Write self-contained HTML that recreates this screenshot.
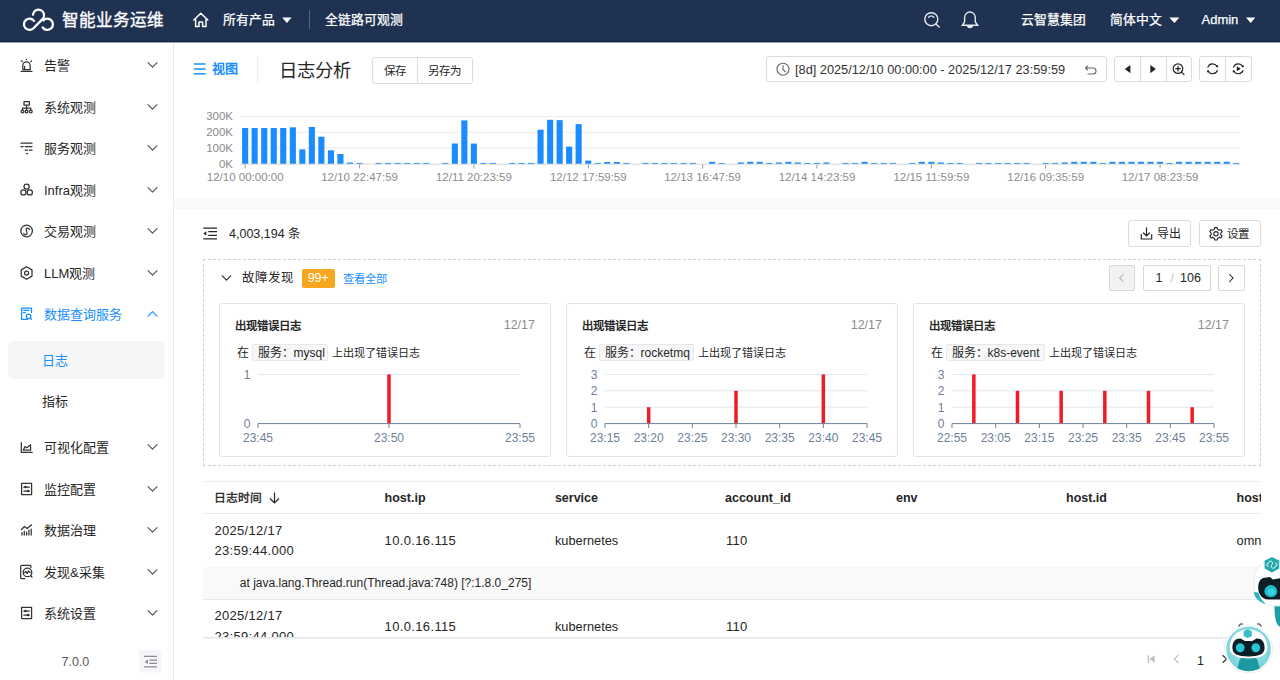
<!DOCTYPE html>
<html lang="zh-CN"><head><meta charset="utf-8">
<style>
*{box-sizing:border-box;margin:0;padding:0}
html,body{width:1280px;height:680px;overflow:hidden;background:#fff}
body{position:relative;font-family:"Liberation Sans",sans-serif;color:#262626;font-size:13px}
.a{position:absolute;white-space:nowrap}
#hdr{position:absolute;left:0;top:0;width:1280px;height:42px;background:#1f3251;border-bottom:1px solid #0f1f3b;box-shadow:0 1px 0 rgba(15,31,59,0.4);z-index:5}
#hdr .t{position:absolute;color:#fff;white-space:nowrap;-webkit-text-stroke:0.25px #fff}
#side{position:absolute;left:0;top:42px;width:174px;height:638px;border-right:1px solid #ebebeb;background:#fff}
.mi{position:absolute;left:0;width:173px;height:40px}
.mi .ic{position:absolute;left:20px;top:14px;width:13px;height:13px}
.mi .tx{position:absolute;left:44px;top:0;line-height:40px;font-size:13px;color:#262626;white-space:nowrap}
.mi .cv{position:absolute;left:148px;top:17px;width:9px;height:6px}
.btn{position:absolute;border:1px solid #dcdcdc;border-radius:3px;background:#fff}
svg{display:block}
</style></head><body>
<div id="hdr">
<svg class="a" style="left:0;top:0" width="60" height="42" viewBox="0 0 60 42">
<g fill="none" stroke="#fff" stroke-width="2.3" stroke-linecap="round">
<path d="M33.97,20.93 A5.6,5.6 0 1 0 33.46,28.26 L42.46,19.16 A5.6,5.6 0 1 0 32.94,14.52"/>
<path d="M43.34,20.34 A5.6,5.6 0 1 1 42.71,27.51"/>
</g></svg>
<div class="t" style="left:62px;top:10px;font-size:16.6px;line-height:22px;-webkit-text-stroke:0.35px #fff">智能业务运维</div>
<svg class="a" style="left:190px;top:10px" width="22" height="22" viewBox="190 10 22 22">
<path d="M193.8,20 L200.8,13.2 L207.8,20 M195.6,18.3 V26.6 H199 V22 H202.6 V26.6 H206 V18.3" fill="none" stroke="#fff" stroke-width="1.5" stroke-linejoin="round" stroke-linecap="round"/>
</svg>
<div class="t" style="left:223px;top:11px;font-size:12.8px;line-height:18px">所有产品</div>
<svg class="a" style="left:280px;top:15px" width="14" height="10" viewBox="280 15 14 10"><path d="M282.2,17.4 H291.6 L286.9,23 Z" fill="#fff"/></svg>
<div class="a" style="left:309px;top:10px;width:1px;height:19px;background:#56667f"></div>
<div class="t" style="left:324.5px;top:11px;font-size:12.8px;line-height:18px">全链路可观测</div>
<svg class="a" style="left:920px;top:8px" width="64" height="26" viewBox="920 8 64 26">
<g fill="none" stroke="#e6e9ee" stroke-width="1.4" stroke-linecap="round">
<circle cx="931.3" cy="19.2" r="6.5"/>
<path d="M928.7,17.2 Q931.2,14.6 933.8,17.2"/>
<path d="M935.9,23.9 L939.2,27"/>
<path d="M962.3,25.3 L964.6,22 V17.6 A5.35,5.6 0 0 1 975.3,17.6 V22 L977.7,25.3 Z"/>
<path d="M967.6,26.3 A2.5,1.9 0 0 0 972.4,26.3 Z" fill="#e6e9ee"/>
</g></svg>
<div class="t" style="left:1021px;top:11px;font-size:12.8px;line-height:18px">云智慧集团</div>
<div class="t" style="left:1110px;top:11px;font-size:12.8px;line-height:18px">简体中文</div>
<svg class="a" style="left:1167px;top:15px" width="14" height="10" viewBox="1167 15 14 10"><path d="M1169.3,17.4 H1179.4 L1174.35,23 Z" fill="#fff"/></svg>
<div class="t" style="left:1201.5px;top:11px;font-size:13px;line-height:18px">Admin</div>
<svg class="a" style="left:1244px;top:15px" width="14" height="10" viewBox="1244 15 14 10"><path d="M1246,17.4 H1255.3 L1250.65,23 Z" fill="#fff"/></svg>
</div>
<div id="side"></div>
<div class="a" style="left:8px;top:341px;width:157px;height:38px;border-radius:5px;background:#f5f6f8"></div>
<svg class="a" style="left:0;top:42px" width="173" height="638" viewBox="0 42 173 638">
<g stroke="#333" stroke-width="1.25" fill="none" stroke-linecap="round" stroke-linejoin="round"><path d="M22.8,69.6 V65.6 A3.7,3.7 0 0 1 30.2,65.6 V69.6 Z M24.6,66.4 V69.2 M21.1,71.4 H31.9 M21.4,60.8 L22.2,61.5 M31.6,60.8 L30.8,61.5"/><circle cx="26.5" cy="59.6" r="0.75" fill="#333" stroke="none"/></g>
<path d="M148,62.7 L152.5,67.2 L157,62.7" fill="none" stroke="#595959" stroke-width="1.2" stroke-linecap="round" stroke-linejoin="round"/>
<g stroke="#333" stroke-width="1.25" fill="none" stroke-linecap="round" stroke-linejoin="round"><path d="M24,101.5 H29.3 V105.2 H24 Z M26.6,105.2 V108 M22.5,108 H30.8 M22.5,108 V110 M26.6,108 V110 M30.8,108 V110"/><circle cx="22.5" cy="111.5" r="1.4" stroke="#333" stroke-width="1.25" fill="none" stroke-linecap="round" stroke-linejoin="round"/><circle cx="26.6" cy="111.5" r="1.4" stroke="#333" stroke-width="1.25" fill="none" stroke-linecap="round" stroke-linejoin="round"/><circle cx="30.8" cy="111.5" r="1.4" stroke="#333" stroke-width="1.25" fill="none" stroke-linecap="round" stroke-linejoin="round"/></g>
<path d="M148,104.7 L152.5,109.2 L157,104.7" fill="none" stroke="#595959" stroke-width="1.2" stroke-linecap="round" stroke-linejoin="round"/>
<g stroke="#333" stroke-width="1.25" fill="none" stroke-linecap="round" stroke-linejoin="round"><path d="M21,143.2 H32 M21,146.6 H23.2 M25.2,146.6 H32 M25.2,150.2 H27.6 M29.4,150.2 H32 M26.5,153.6 H27.6"/></g>
<path d="M148,145.7 L152.5,150.2 L157,145.7" fill="none" stroke="#595959" stroke-width="1.2" stroke-linecap="round" stroke-linejoin="round"/>
<g stroke="#333" stroke-width="1.25" fill="none" stroke-linecap="round" stroke-linejoin="round"><circle cx="26.6" cy="186.6" r="2.6" stroke="#333" stroke-width="1.25" fill="none" stroke-linecap="round" stroke-linejoin="round"/><circle cx="23.4" cy="192.4" r="2.6" stroke="#333" stroke-width="1.25" fill="none" stroke-linecap="round" stroke-linejoin="round"/><circle cx="29.8" cy="192.4" r="2.6" stroke="#333" stroke-width="1.25" fill="none" stroke-linecap="round" stroke-linejoin="round"/></g>
<path d="M148,187.7 L152.5,192.2 L157,187.7" fill="none" stroke="#595959" stroke-width="1.2" stroke-linecap="round" stroke-linejoin="round"/>
<g stroke="#333" stroke-width="1.25" fill="none" stroke-linecap="round" stroke-linejoin="round"><circle cx="26.6" cy="231" r="5.8" stroke="#333" stroke-width="1.25" fill="none" stroke-linecap="round" stroke-linejoin="round"/><path d="M29.5,229.6 C29,227.6 26,227.6 26.2,229.8 C26.4,231.6 27.2,232 27,233.4 C26.8,235.4 24,235.2 23.8,233.4"/></g>
<path d="M148,228.7 L152.5,233.2 L157,228.7" fill="none" stroke="#595959" stroke-width="1.2" stroke-linecap="round" stroke-linejoin="round"/>
<g stroke="#333" stroke-width="1.25" fill="none" stroke-linecap="round" stroke-linejoin="round"><path d="M26.6,266.7 L32,269.9 V276.1 L26.6,279.3 L21.2,276.1 V269.9 Z"/><circle cx="26.6" cy="273" r="2" stroke="#333" stroke-width="1.25" fill="none" stroke-linecap="round" stroke-linejoin="round"/></g>
<path d="M148,270.7 L152.5,275.2 L157,270.7" fill="none" stroke="#595959" stroke-width="1.2" stroke-linecap="round" stroke-linejoin="round"/>
<g stroke="#1890ff" stroke-width="1.25" fill="none" stroke-linecap="round" stroke-linejoin="round"><path d="M27.5,319.3 H21.6 V308 H31.5 V312.5 M23.4,310.3 H29 M23.4,312.5 H25.3"/><circle cx="28.6" cy="316.4" r="2.3" stroke="#1890ff" stroke-width="1.25" fill="none" stroke-linecap="round" stroke-linejoin="round"/><path d="M30.3,318.1 L31.6,319.4"/></g>
<path d="M148,316.2 L152.5,311.7 L157,316.2" fill="none" stroke="#1890ff" stroke-width="1.2" stroke-linecap="round" stroke-linejoin="round"/>
<g stroke="#333" stroke-width="1.25" fill="none" stroke-linecap="round" stroke-linejoin="round"><path d="M21.3,442.5 V452.4 H32.2 M23.2,450.2 L25,446.6 L26.8,447.8 L30.6,444.8 V450.2 Z"/></g>
<path d="M148,444.7 L152.5,449.2 L157,444.7" fill="none" stroke="#595959" stroke-width="1.2" stroke-linecap="round" stroke-linejoin="round"/>
<g stroke="#333" stroke-width="1.25" fill="none" stroke-linecap="round" stroke-linejoin="round"><path d="M21.6,483.4 H31.6 V494.6 H21.6 Z M23.8,487 H29.4 M23.8,491 H29.4"/><circle cx="25.5" cy="487" r="1.3" fill="#333" stroke="none"/><circle cx="28" cy="491" r="1.3" fill="#333" stroke="none"/></g>
<path d="M148,486.7 L152.5,491.2 L157,486.7" fill="none" stroke="#595959" stroke-width="1.2" stroke-linecap="round" stroke-linejoin="round"/>
<g stroke="#333" stroke-width="1.25" fill="none" stroke-linecap="round" stroke-linejoin="round"><path d="M22,535 V532.5 M24.3,535 V531 M26.6,535 V532 M28.9,535 V530 M31.2,535 V529 M21.5,529.5 L24.5,526.5 L27,528.5 L31.5,525"/></g>
<path d="M148,527.7 L152.5,532.2 L157,527.7" fill="none" stroke="#595959" stroke-width="1.2" stroke-linecap="round" stroke-linejoin="round"/>
<g stroke="#333" stroke-width="1.25" fill="none" stroke-linecap="round" stroke-linejoin="round"><path d="M24.8,578.6 H21.6 A0.9,0.9 0 0 1 20.7,577.7 V566.2 A0.9,0.9 0 0 1 21.6,565.3 H30 A0.9,0.9 0 0 1 30.9,566.2 V567.6"/><circle cx="27.5" cy="572.4" r="4.3" stroke="#333" stroke-width="1.25" fill="none" stroke-linecap="round" stroke-linejoin="round"/><path d="M24.7,572.6 L25.9,571.6 L27.2,573.6 L28.4,570.9 L30.2,572.4 M30.6,575.5 L32,577.2"/></g>
<path d="M148,569.7 L152.5,574.2 L157,569.7" fill="none" stroke="#595959" stroke-width="1.2" stroke-linecap="round" stroke-linejoin="round"/>
<g stroke="#333" stroke-width="1.25" fill="none" stroke-linecap="round" stroke-linejoin="round"><path d="M21.6,607.4 H31.6 V618.6 H21.6 Z M23.8,611 H29.4 M23.8,615 H29.4"/><circle cx="25.5" cy="611" r="1.3" fill="#333" stroke="none"/><circle cx="28" cy="615" r="1.3" fill="#333" stroke="none"/></g>
<path d="M148,610.7 L152.5,615.2 L157,610.7" fill="none" stroke="#595959" stroke-width="1.2" stroke-linecap="round" stroke-linejoin="round"/>
<rect x="139" y="650" width="22.5" height="22.5" rx="0.5" fill="#f4f6f9"/>
<g stroke="#8c8c8c" stroke-width="1.3" fill="none"><path d="M144,656.3 H157 M149.4,660.2 H157 M149.4,663.3 H157 M144,666.8 H157"/></g><path d="M148,659.4 V664 L144.6,661.7 Z" fill="#8c8c8c"/>
</svg>
<div class="a" style="left:44px;top:56px;line-height:20px;font-size:13px;color:#262626">告警</div>
<div class="a" style="left:44px;top:98px;line-height:20px;font-size:13px;color:#262626">系统观测</div>
<div class="a" style="left:44px;top:139px;line-height:20px;font-size:13px;color:#262626">服务观测</div>
<div class="a" style="left:44px;top:181px;line-height:20px;font-size:13px;color:#262626">Infra观测</div>
<div class="a" style="left:44px;top:222px;line-height:20px;font-size:13px;color:#262626">交易观测</div>
<div class="a" style="left:44px;top:264px;line-height:20px;font-size:13px;color:#262626">LLM观测</div>
<div class="a" style="left:44px;top:305px;line-height:20px;font-size:13px;color:#1890ff">数据查询服务</div>
<div class="a" style="left:44px;top:438px;line-height:20px;font-size:13px;color:#262626">可视化配置</div>
<div class="a" style="left:44px;top:480px;line-height:20px;font-size:13px;color:#262626">监控配置</div>
<div class="a" style="left:44px;top:521px;line-height:20px;font-size:13px;color:#262626">数据治理</div>
<div class="a" style="left:44px;top:563px;line-height:20px;font-size:13px;color:#262626">发现&采集</div>
<div class="a" style="left:44px;top:604px;line-height:20px;font-size:13px;color:#262626">系统设置</div>
<div class="a" style="left:42px;top:351px;line-height:20px;font-size:13px;color:#1890ff">日志</div>
<div class="a" style="left:42px;top:392px;line-height:20px;font-size:13px;color:#262626">指标</div>
<div class="a" style="left:61.5px;top:653px;line-height:18px;font-size:12.5px;color:#595959">7.0.0</div>
<svg class="a" style="left:190px;top:58px" width="20" height="20" viewBox="190 58 20 20"><path d="M193.8,64.1 H205.6 M193.8,69 H205.6 M193.8,73.8 H205.6" stroke="#1890ff" stroke-width="1.5"/></svg>
<div class="a" style="left:212px;top:59px;font-size:13px;line-height:20px;color:#1890ff;font-weight:bold">视图</div>
<div class="a" style="left:257px;top:56px;width:1px;height:26px;background:#ececec"></div>
<div class="a" style="left:279px;top:58.5px;font-size:18.4px;line-height:24px;color:#262626">日志分析</div>
<div class="btn" style="left:372px;top:57px;width:101px;height:27px"></div>
<div class="a" style="left:416.5px;top:58px;width:1px;height:25px;background:#dcdcdc"></div>
<div class="a" style="left:383.5px;top:62px;font-size:11.5px;line-height:18px;color:#262626">保存</div>
<div class="a" style="left:428px;top:62px;font-size:11.5px;line-height:18px;color:#262626">另存为</div>
<div class="btn" style="left:766px;top:56px;width:341px;height:26px"></div>
<svg class="a" style="left:774px;top:60px" width="340" height="20" viewBox="774 60 340 20"><g fill="none" stroke="#666" stroke-width="1.1" stroke-linecap="round"><circle cx="783" cy="69.2" r="6"/><path d="M783,65.5 V69.5 L785.5,71.8"/><path d="M1087.5,66 L1085.5,68 L1087.5,70 M1085.8,68 H1093 A3,3 0 0 1 1093,74 H1088"/></g></svg>
<div class="a" style="left:795px;top:61px;font-size:12.75px;line-height:18px;color:#333">[8d] 2025/12/10 00:00:00 - 2025/12/17 23:59:59</div>
<div class="btn" style="left:1114px;top:56px;width:78px;height:26px"></div>
<div class="a" style="left:1140px;top:57px;width:1px;height:24px;background:#dcdcdc"></div>
<div class="a" style="left:1165.5px;top:57px;width:1px;height:24px;background:#dcdcdc"></div>
<div class="btn" style="left:1199px;top:56px;width:53px;height:26px"></div>
<div class="a" style="left:1225px;top:57px;width:1px;height:24px;background:#dcdcdc"></div>
<svg class="a" style="left:1114px;top:56px" width="140" height="26" viewBox="1114 56 140 26">
<path d="M1130.4,64.9 V73.3 L1124.8,69.1 Z" fill="#222"/>
<path d="M1150.3,64.9 V73.3 L1155.9,69.1 Z" fill="#222"/>
<g fill="none" stroke="#222" stroke-width="1.2" stroke-linecap="round"><circle cx="1178" cy="68.6" r="4.8"/><path d="M1178,66.3 V70.9 M1175.7,68.6 H1180.3 M1181.5,72.1 L1184,74.6"/>
<path d="M1207.9,67.1 A5,5 0 0 1 1216.9,66.3 M1217.3,70.5 A5,5 0 0 1 1208.3,71.3"/>
<path d="M1233.6,67.1 A5,5 0 0 1 1242.6,66.3 M1243,70.5 A5,5 0 0 1 1234,71.3"/></g>
<g fill="#222"><circle cx="1217.1" cy="66.3" r="1.15"/><circle cx="1208.1" cy="71.4" r="1.15"/><circle cx="1242.8" cy="66.3" r="1.15"/><circle cx="1233.8" cy="71.4" r="1.15"/></g>
<path d="M1236.8,66.3 V71.3 L1240.8,68.8 Z" fill="#222"/>
</svg>

<svg class="a" style="left:174px;top:100px" width="1106" height="98" viewBox="174 100 1106 98">
<g stroke="#ebebeb" stroke-width="1"><path d="M240,116.5 H1240 M240,132.3 H1240 M240,148.1 H1240"/></g>
<g fill="#1b8cff"><rect x="242.1" y="128.0" width="6.1" height="36.0"/>
<rect x="251.6" y="128.0" width="6.1" height="36.0"/>
<rect x="261.2" y="128.0" width="6.1" height="36.0"/>
<rect x="270.7" y="128.0" width="6.1" height="36.0"/>
<rect x="280.2" y="128.0" width="6.1" height="36.0"/>
<rect x="289.8" y="127.3" width="6.1" height="36.7"/>
<rect x="299.3" y="149.4" width="6.1" height="14.6"/>
<rect x="308.8" y="127.0" width="6.1" height="37.0"/>
<rect x="318.3" y="136.7" width="6.1" height="27.3"/>
<rect x="327.9" y="150.3" width="6.1" height="13.7"/>
<rect x="337.4" y="154.0" width="6.1" height="10.0"/>
<rect x="346.9" y="162.5" width="6.1" height="1.5"/>
<rect x="356.5" y="162.9" width="6.1" height="1.1"/>
<rect x="375.5" y="162.9" width="6.1" height="1.1"/>
<rect x="385.0" y="162.9" width="6.1" height="1.1"/>
<rect x="394.6" y="162.9" width="6.1" height="1.1"/>
<rect x="404.1" y="162.9" width="6.1" height="1.1"/>
<rect x="413.6" y="162.9" width="6.1" height="1.1"/>
<rect x="423.2" y="162.9" width="6.1" height="1.1"/>
<rect x="442.2" y="162.9" width="6.1" height="1.1"/>
<rect x="451.8" y="143.5" width="6.1" height="20.5"/>
<rect x="461.3" y="120.4" width="6.1" height="43.6"/>
<rect x="470.8" y="143.6" width="6.1" height="20.4"/>
<rect x="480.3" y="162.9" width="6.1" height="1.1"/>
<rect x="489.9" y="162.9" width="6.1" height="1.1"/>
<rect x="508.9" y="162.9" width="6.1" height="1.1"/>
<rect x="518.5" y="162.9" width="6.1" height="1.1"/>
<rect x="528.0" y="162.9" width="6.1" height="1.1"/>
<rect x="537.5" y="129.7" width="6.1" height="34.3"/>
<rect x="547.1" y="119.8" width="6.1" height="44.2"/>
<rect x="556.6" y="120.1" width="6.1" height="43.9"/>
<rect x="566.1" y="146.6" width="6.1" height="17.4"/>
<rect x="575.6" y="124.1" width="6.1" height="39.9"/>
<rect x="585.2" y="160.6" width="6.1" height="3.4"/>
<rect x="594.7" y="162.9" width="6.1" height="1.1"/>
<rect x="604.2" y="162.0" width="6.1" height="2.0"/>
<rect x="613.8" y="162.0" width="6.1" height="2.0"/>
<rect x="623.3" y="162.9" width="6.1" height="1.1"/>
<rect x="642.4" y="162.9" width="6.1" height="1.1"/>
<rect x="651.9" y="162.9" width="6.1" height="1.1"/>
<rect x="661.4" y="162.9" width="6.1" height="1.1"/>
<rect x="670.9" y="162.9" width="6.1" height="1.1"/>
<rect x="680.5" y="162.9" width="6.1" height="1.1"/>
<rect x="690.0" y="162.9" width="6.1" height="1.1"/>
<rect x="709.1" y="161.8" width="6.1" height="2.2"/>
<rect x="718.6" y="162.9" width="6.1" height="1.1"/>
<rect x="737.7" y="162.4" width="6.1" height="1.6"/>
<rect x="747.2" y="161.8" width="6.1" height="2.2"/>
<rect x="756.7" y="161.8" width="6.1" height="2.2"/>
<rect x="766.2" y="162.9" width="6.1" height="1.1"/>
<rect x="775.8" y="162.4" width="6.1" height="1.6"/>
<rect x="785.3" y="161.8" width="6.1" height="2.2"/>
<rect x="794.8" y="162.4" width="6.1" height="1.6"/>
<rect x="804.4" y="162.9" width="6.1" height="1.1"/>
<rect x="813.9" y="162.9" width="6.1" height="1.1"/>
<rect x="823.4" y="162.4" width="6.1" height="1.6"/>
<rect x="842.5" y="162.9" width="6.1" height="1.1"/>
<rect x="852.0" y="162.9" width="6.1" height="1.1"/>
<rect x="861.5" y="161.8" width="6.1" height="2.2"/>
<rect x="871.1" y="162.9" width="6.1" height="1.1"/>
<rect x="880.6" y="162.9" width="6.1" height="1.1"/>
<rect x="890.1" y="162.9" width="6.1" height="1.1"/>
<rect x="909.2" y="162.9" width="6.1" height="1.1"/>
<rect x="918.7" y="161.8" width="6.1" height="2.2"/>
<rect x="928.3" y="161.8" width="6.1" height="2.2"/>
<rect x="937.8" y="162.4" width="6.1" height="1.6"/>
<rect x="947.3" y="162.9" width="6.1" height="1.1"/>
<rect x="956.9" y="162.9" width="6.1" height="1.1"/>
<rect x="975.9" y="162.9" width="6.1" height="1.1"/>
<rect x="985.4" y="162.9" width="6.1" height="1.1"/>
<rect x="995.0" y="162.9" width="6.1" height="1.1"/>
<rect x="1004.5" y="162.9" width="6.1" height="1.1"/>
<rect x="1014.0" y="162.9" width="6.1" height="1.1"/>
<rect x="1023.6" y="162.9" width="6.1" height="1.1"/>
<rect x="1042.6" y="162.9" width="6.1" height="1.1"/>
<rect x="1052.1" y="162.9" width="6.1" height="1.1"/>
<rect x="1061.7" y="162.4" width="6.1" height="1.6"/>
<rect x="1071.2" y="161.8" width="6.1" height="2.2"/>
<rect x="1080.7" y="161.8" width="6.1" height="2.2"/>
<rect x="1090.3" y="161.8" width="6.1" height="2.2"/>
<rect x="1099.8" y="162.9" width="6.1" height="1.1"/>
<rect x="1109.3" y="161.8" width="6.1" height="2.2"/>
<rect x="1118.9" y="161.8" width="6.1" height="2.2"/>
<rect x="1128.4" y="161.8" width="6.1" height="2.2"/>
<rect x="1137.9" y="161.8" width="6.1" height="2.2"/>
<rect x="1147.4" y="161.8" width="6.1" height="2.2"/>
<rect x="1157.0" y="161.8" width="6.1" height="2.2"/>
<rect x="1166.5" y="162.9" width="6.1" height="1.1"/>
<rect x="1176.0" y="161.8" width="6.1" height="2.2"/>
<rect x="1185.6" y="161.8" width="6.1" height="2.2"/>
<rect x="1195.1" y="161.8" width="6.1" height="2.2"/>
<rect x="1204.6" y="161.8" width="6.1" height="2.2"/>
<rect x="1214.2" y="161.8" width="6.1" height="2.2"/>
<rect x="1223.7" y="161.8" width="6.1" height="2.2"/>
<rect x="1233.2" y="162.9" width="6.1" height="1.1"/></g>
<path d="M240,164.2 H1240" stroke="#d9d9d9" stroke-width="1"/>
<g stroke="#999" stroke-width="1"><path d="M245.2,164.5 V168.5"/><path d="M359.6,164.5 V168.5"/><path d="M473.9,164.5 V168.5"/><path d="M588.3,164.5 V168.5"/><path d="M702.6,164.5 V168.5"/><path d="M817.0,164.5 V168.5"/><path d="M931.4,164.5 V168.5"/><path d="M1045.7,164.5 V168.5"/><path d="M1160.1,164.5 V168.5"/></g>
<g font-family="Liberation Sans" font-size="11.5" fill="#8c8c8c" text-anchor="end">
<text x="233" y="120.4">300K</text>
<text x="233" y="136.2">200K</text>
<text x="233" y="152">100K</text>
<text x="233" y="167.8">0K</text>
</g><g font-family="Liberation Sans" font-size="11.5" fill="#8c8c8c" text-anchor="middle">
<text x="245.2" y="180.8">12/10 00:00:00</text>
<text x="359.6" y="180.8">12/10 22:47:59</text>
<text x="473.9" y="180.8">12/11 20:23:59</text>
<text x="588.3" y="180.8">12/12 17:59:59</text>
<text x="702.6" y="180.8">12/13 16:47:59</text>
<text x="817.0" y="180.8">12/14 14:23:59</text>
<text x="931.4" y="180.8">12/15 11:59:59</text>
<text x="1045.7" y="180.8">12/16 09:35:59</text>
<text x="1160.1" y="180.8">12/17 08:23:59</text>
</g></svg>
<div class="a" style="left:174px;top:198px;width:1106px;height:11px;background:#f9f9f9"></div><svg class="a" style="left:200px;top:222px" width="22" height="22" viewBox="200 222 22 22"><g stroke="#262626" stroke-width="1.3" fill="none"><path d="M203.3,228.2 H217 M208.3,231.7 H217 M208.3,235.4 H217 M203.3,238.9 H217"/></g><path d="M206.3,231.2 V235.8 L203.3,233.5 Z" fill="#262626"/></svg>
<div class="a" style="left:229px;top:225px;font-size:12.5px;line-height:18px;color:#262626">4,003,194 条</div>
<div class="btn" style="left:1128px;top:220px;width:63px;height:27px"></div>
<svg class="a" style="left:1138px;top:224px" width="20" height="20" viewBox="1138 224 20 20"><g stroke="#262626" stroke-width="1.2" fill="none" stroke-linecap="round"><path d="M1146.5,227.8 V236 M1143.5,233 L1146.5,236 L1149.5,233 M1141.3,234.5 V239 H1151.7 V234.5"/></g></svg>
<div class="a" style="left:1157px;top:224.5px;font-size:12px;line-height:18px;color:#262626">导出</div>
<div class="btn" style="left:1199px;top:220px;width:62px;height:27px"></div>
<svg class="a" style="left:1206px;top:224px" width="20" height="20" viewBox="1206 224 20 20"><g stroke="#262626" stroke-width="1.1" fill="none"><path d="M1214.8,227.6 L1217.1,227.6 L1217.6,229.3 L1219.2,230.2 L1220.9,229.7 L1222.1,231.7 L1220.8,232.9 V234.7 L1222.1,235.9 L1220.9,237.9 L1219.2,237.4 L1217.6,238.3 L1217.1,240 H1214.8 L1214.3,238.3 L1212.7,237.4 L1211,237.9 L1209.8,235.9 L1211.1,234.7 V232.9 L1209.8,231.7 L1211,229.7 L1212.7,230.2 L1214.3,229.3 Z"/><circle cx="1215.95" cy="233.8" r="2.2"/></g></svg>
<div class="a" style="left:1227px;top:224.5px;font-size:11.5px;line-height:18px;color:#262626">设置</div>
<div class="a" style="left:203px;top:259px;width:1058px;height:207px;border:1px dashed #cfcfcf"></div>
<svg class="a" style="left:218px;top:270px" width="16" height="16" viewBox="218 270 16 16"><path d="M222.3,275.8 L226.5,280.2 L230.7,275.8" fill="none" stroke="#333" stroke-width="1.2" stroke-linecap="round" stroke-linejoin="round"/></svg>
<div class="a" style="left:242px;top:268px;font-size:12.5px;line-height:20px;color:#262626">故障发现</div>
<div class="a" style="left:302px;top:269px;width:32.5px;height:18.5px;border-radius:2px;background:#f7a71d;color:#fff;font-size:12.5px;line-height:18.5px;text-align:center">99+</div>
<div class="a" style="left:342.5px;top:268.5px;font-size:11.3px;line-height:20px;color:#1890ff">查看全部</div>
<div class="a" style="left:1109px;top:265px;width:26px;height:26px;border:1px solid #d9d9d9;border-radius:2px;background:#f2f2f2"></div>
<svg class="a" style="left:1109px;top:265px" width="140" height="26" viewBox="1109 265 140 26"><path d="M1123.5,274 L1119.8,278 L1123.5,282" fill="none" stroke="#bfbfbf" stroke-width="1.1"/><path d="M1229.3,274 L1233,278 L1229.3,282" fill="none" stroke="#262626" stroke-width="1.1"/></svg>
<div class="a" style="left:1143px;top:265px;width:68px;height:26px;border:1px solid #d9d9d9;border-radius:2px;background:#fff"></div>
<div class="a" style="left:1155.5px;top:269px;font-size:12.5px;line-height:18px;color:#262626">1</div>
<div class="a" style="left:1170.5px;top:269px;font-size:12.5px;line-height:18px;color:#bfbfbf">/</div>
<div class="a" style="left:1180px;top:269px;font-size:12.5px;line-height:18px;color:#262626">106</div>
<div class="a" style="left:1218px;top:265px;width:27px;height:26px;border:1px solid #d9d9d9;border-radius:2px;background:#fff"></div>

<svg class="a" style="left:1109px;top:265px" width="140" height="26" viewBox="1109 265 140 26"><path d="M1123.5,274 L1119.8,278 L1123.5,282" fill="none" stroke="#bfbfbf" stroke-width="1.1"/><path d="M1229.3,274 L1233,278 L1229.3,282" fill="none" stroke="#262626" stroke-width="1.1"/></svg>
<div class="a" style="left:219px;top:303px;width:332px;height:154px;border:1px solid #e3e3e3;border-radius:3px;background:#fff"></div>
<div class="a" style="left:235px;top:318px;font-size:11.4px;line-height:17px;color:#262626;font-weight:bold">出现错误日志</div>
<div class="a" style="left:469px;top:317px;width:66px;text-align:right;font-size:12.5px;line-height:17px;color:#8c8c8c">12/17</div>
<div class="a" style="left:237px;top:344px;font-size:12px;line-height:18px;color:#262626">在</div>
<div class="a" style="left:252px;top:344px;width:76px;height:17px;border:1px solid #e8e8e8;border-radius:2px;background:#f7f7f7;font-size:12px;line-height:16.5px;color:#262626;padding-left:4.5px">服务：mysql</div>
<div class="a" style="left:332px;top:344px;font-size:11.1px;line-height:18px;color:#262626">上出现了错误日志</div>
<svg class="a" style="left:219px;top:365px" width="332" height="85" viewBox="219 365 332 85">
<g stroke="#e0e6f1" stroke-width="1"><path d="M258,374.4 H520"/></g>
<rect x="387.25" y="374.4" width="3.5" height="49.2" fill="#ee1c25"/>
<path d="M258,423.6 H520" stroke="#6e7f99" stroke-width="1"/>
<g stroke="#6e7f99" stroke-width="1"><path d="M258.00,423.6 V428"/><path d="M389.00,423.6 V428"/><path d="M520.00,423.6 V428"/></g>
<g font-family="Liberation Sans" font-size="12" fill="#6e7f99" text-anchor="end">
<text x="250.5" y="378.7">1</text>
<text x="250.5" y="427.90000000000003">0</text>
</g><g font-family="Liberation Sans" font-size="12" fill="#6e7f99" text-anchor="middle">
<text x="258.00" y="442">23:45</text>
<text x="389.00" y="442">23:50</text>
<text x="520.00" y="442">23:55</text>
</g></svg>
<div class="a" style="left:566px;top:303px;width:332px;height:154px;border:1px solid #e3e3e3;border-radius:3px;background:#fff"></div>
<div class="a" style="left:582px;top:318px;font-size:11.4px;line-height:17px;color:#262626;font-weight:bold">出现错误日志</div>
<div class="a" style="left:816px;top:317px;width:66px;text-align:right;font-size:12.5px;line-height:17px;color:#8c8c8c">12/17</div>
<div class="a" style="left:584px;top:344px;font-size:12px;line-height:18px;color:#262626">在</div>
<div class="a" style="left:599px;top:344px;width:95px;height:17px;border:1px solid #e8e8e8;border-radius:2px;background:#f7f7f7;font-size:12px;line-height:16.5px;color:#262626;padding-left:4.5px">服务：rocketmq</div>
<div class="a" style="left:698px;top:344px;font-size:11.1px;line-height:18px;color:#262626">上出现了错误日志</div>
<svg class="a" style="left:566px;top:365px" width="332" height="85" viewBox="566 365 332 85">
<g stroke="#e0e6f1" stroke-width="1"><path d="M605,374.4 H867"/><path d="M605,390.8 H867"/><path d="M605,407.2 H867"/></g>
<rect x="646.92" y="407.2" width="3.5" height="16.4" fill="#ee1c25"/>
<rect x="734.25" y="390.8" width="3.5" height="32.8" fill="#ee1c25"/>
<rect x="821.58" y="374.4" width="3.5" height="49.2" fill="#ee1c25"/>
<path d="M605,423.6 H867" stroke="#6e7f99" stroke-width="1"/>
<g stroke="#6e7f99" stroke-width="1"><path d="M605.00,423.6 V428"/><path d="M648.67,423.6 V428"/><path d="M692.33,423.6 V428"/><path d="M736.00,423.6 V428"/><path d="M779.67,423.6 V428"/><path d="M823.33,423.6 V428"/><path d="M867.00,423.6 V428"/></g>
<g font-family="Liberation Sans" font-size="12" fill="#6e7f99" text-anchor="end">
<text x="597.5" y="378.7">3</text>
<text x="597.5" y="395.1">2</text>
<text x="597.5" y="411.5">1</text>
<text x="597.5" y="427.90000000000003">0</text>
</g><g font-family="Liberation Sans" font-size="12" fill="#6e7f99" text-anchor="middle">
<text x="605.00" y="442">23:15</text>
<text x="648.67" y="442">23:20</text>
<text x="692.33" y="442">23:25</text>
<text x="736.00" y="442">23:30</text>
<text x="779.67" y="442">23:35</text>
<text x="823.33" y="442">23:40</text>
<text x="867.00" y="442">23:45</text>
</g></svg>
<div class="a" style="left:913px;top:303px;width:332px;height:154px;border:1px solid #e3e3e3;border-radius:3px;background:#fff"></div>
<div class="a" style="left:929px;top:318px;font-size:11.4px;line-height:17px;color:#262626;font-weight:bold">出现错误日志</div>
<div class="a" style="left:1163px;top:317px;width:66px;text-align:right;font-size:12.5px;line-height:17px;color:#8c8c8c">12/17</div>
<div class="a" style="left:931px;top:344px;font-size:12px;line-height:18px;color:#262626">在</div>
<div class="a" style="left:946px;top:344px;width:99px;height:17px;border:1px solid #e8e8e8;border-radius:2px;background:#f7f7f7;font-size:12px;line-height:16.5px;color:#262626;padding-left:4.5px">服务：k8s-event</div>
<div class="a" style="left:1049px;top:344px;font-size:11.1px;line-height:18px;color:#262626">上出现了错误日志</div>
<svg class="a" style="left:913px;top:365px" width="332" height="85" viewBox="913 365 332 85">
<g stroke="#e0e6f1" stroke-width="1"><path d="M952,374.4 H1214"/><path d="M952,390.8 H1214"/><path d="M952,407.2 H1214"/></g>
<rect x="972.08" y="374.4" width="3.5" height="49.2" fill="#ee1c25"/>
<rect x="1015.75" y="390.8" width="3.5" height="32.8" fill="#ee1c25"/>
<rect x="1059.42" y="390.8" width="3.5" height="32.8" fill="#ee1c25"/>
<rect x="1103.08" y="390.8" width="3.5" height="32.8" fill="#ee1c25"/>
<rect x="1146.75" y="390.8" width="3.5" height="32.8" fill="#ee1c25"/>
<rect x="1190.42" y="407.2" width="3.5" height="16.4" fill="#ee1c25"/>
<path d="M952,423.6 H1214" stroke="#6e7f99" stroke-width="1"/>
<g stroke="#6e7f99" stroke-width="1"><path d="M952.00,423.6 V428"/><path d="M995.67,423.6 V428"/><path d="M1039.33,423.6 V428"/><path d="M1083.00,423.6 V428"/><path d="M1126.67,423.6 V428"/><path d="M1170.33,423.6 V428"/><path d="M1214.00,423.6 V428"/></g>
<g font-family="Liberation Sans" font-size="12" fill="#6e7f99" text-anchor="end">
<text x="944.5" y="378.7">3</text>
<text x="944.5" y="395.1">2</text>
<text x="944.5" y="411.5">1</text>
<text x="944.5" y="427.90000000000003">0</text>
</g><g font-family="Liberation Sans" font-size="12" fill="#6e7f99" text-anchor="middle">
<text x="952.00" y="442">22:55</text>
<text x="995.67" y="442">23:05</text>
<text x="1039.33" y="442">23:15</text>
<text x="1083.00" y="442">23:25</text>
<text x="1126.67" y="442">23:35</text>
<text x="1170.33" y="442">23:45</text>
<text x="1214.00" y="442">23:55</text>
</g></svg><div class="a" style="left:203px;top:481px;width:1058px;height:157px;overflow:hidden">
<div class="a" style="left:0;top:0;width:1058px;height:1px;background:#ededf2"></div>
<div class="a" style="left:0;top:32px;width:1058px;height:1px;background:#e6e6ee"></div>
<div class="a" style="left:10.8px;top:7px;font-size:11.8px;line-height:20px;color:#262626;-webkit-text-stroke:0.35px #262626">日志时间</div><svg class="a" style="left:64px;top:8px" width="14" height="18" viewBox="0 0 14 18"><path d="M7.5,3.5 V14 M3,9.5 L7.5,14 L12,9.5" fill="none" stroke="#262626" stroke-width="1.2"/></svg>
<div class="a" style="left:181.60000000000002px;top:7px;font-size:12.5px;line-height:20px;color:#262626;font-weight:bold">host.ip</div>
<div class="a" style="left:351.9px;top:7px;font-size:12.5px;line-height:20px;color:#262626;font-weight:bold">service</div>
<div class="a" style="left:522px;top:7px;font-size:12.5px;line-height:20px;color:#262626;font-weight:bold">account_id</div>
<div class="a" style="left:693px;top:7px;font-size:12.5px;line-height:20px;color:#262626;font-weight:bold">env</div>
<div class="a" style="left:863px;top:7px;font-size:12.5px;line-height:20px;color:#262626;font-weight:bold">host.id</div>
<div class="a" style="left:1033.6px;top:7px;font-size:12.5px;line-height:20px;color:#262626;font-weight:bold">host.name</div>
<div class="a" style="left:11.5px;top:39.5px;font-size:13px;letter-spacing:0.3px;line-height:20.5px;color:#262626;white-space:normal;width:120px">2025/12/17<br>23:59:44.000</div>
<div class="a" style="left:181.60000000000002px;top:50.0px;font-size:13px;letter-spacing:0.35px;line-height:20px;color:#262626">10.0.16.115</div>
<div class="a" style="left:351.9px;top:50.0px;font-size:12.8px;line-height:20px;color:#262626">kubernetes</div>
<div class="a" style="left:523px;top:50.0px;font-size:13px;letter-spacing:0.3px;line-height:20px;color:#262626">110</div>
<div class="a" style="left:1033.6px;top:50.0px;font-size:12.8px;line-height:20px;color:#262626">omni-prod</div>
<div class="a" style="left:0;top:86px;width:1058px;height:33px;background:#f9f9f9;border-bottom:1px solid #e8e8e8"></div>
<div class="a" style="left:36.8px;top:92px;font-size:12px;line-height:20px;color:#262626">at java.lang.Thread.run(Thread.java:748) [?:1.8.0_275]</div>
<div class="a" style="left:11.5px;top:125px;font-size:13px;letter-spacing:0.3px;line-height:20.5px;color:#262626;white-space:normal;width:120px">2025/12/17<br>23:59:44.000</div>
<div class="a" style="left:181.60000000000002px;top:135.5px;font-size:13px;letter-spacing:0.35px;line-height:20px;color:#262626">10.0.16.115</div>
<div class="a" style="left:351.9px;top:135.5px;font-size:12.8px;line-height:20px;color:#262626">kubernetes</div>
<div class="a" style="left:523px;top:135.5px;font-size:13px;letter-spacing:0.3px;line-height:20px;color:#262626">110</div>

</div>
<div class="a" style="left:203px;top:637px;width:1058px;height:2px;background:linear-gradient(#e3e3e3,#f4f4f4)"></div>
<svg class="a" style="left:1140px;top:650px" width="100" height="20" viewBox="1140 650 100 20">
<path d="M1148.4,655.2 V662.8" stroke="#bfbfbf" stroke-width="1.4"/><path d="M1154.6,655.2 V662.8 L1149.4,659 Z" fill="#bfbfbf"/>
<path d="M1178.4,655 L1174.2,659 L1178.4,663" fill="none" stroke="#bfbfbf" stroke-width="1.1"/>
<path d="M1222.6,655.2 L1226.6,659 L1222.6,662.8" fill="none" stroke="#333" stroke-width="1.2"/>
</svg>
<div class="a" style="left:1197px;top:651.5px;font-size:12.5px;line-height:18px;color:#262626">1</div>

<svg class="a" style="left:1200px;top:550px" width="80" height="130" viewBox="1200 550 80 130">
<defs><radialGradient id="rg" cx="0.5" cy="0.45" r="0.6"><stop offset="0" stop-color="#bdeced"/><stop offset="1" stop-color="#6fcfd4"/></radialGradient></defs>
<path d="M1274.4,604 H1282 V627 C1277,627 1274.4,622 1274.4,604 Z" fill="#1f9fa5"/>
<rect x="1254.2" y="559" width="50" height="47" rx="20" ry="20" fill="#fff" stroke="#d8e8ea" stroke-width="0.8"/>
<path d="M1258.2,588 C1258.2,583 1259.5,579.5 1263,578 L1270,576.9 L1273,579.4 L1282,578 V599.6 H1268 C1262,599 1258.2,594 1258.2,588 Z" fill="#0d1e26"/>
<ellipse cx="1270.8" cy="591.2" rx="6.4" ry="6.1" fill="#1dc0ca"/>
<ellipse cx="1271.5" cy="591.8" rx="3.6" ry="3.4" fill="#39d3db"/>
<path d="M1253.8,592 C1254.5,597.5 1258.5,602 1265.6,604 C1262,600.5 1259.5,597 1258.2,592.5 Z" fill="#2db2b8"/>
<path d="M1271.9,556.9 L1279.2,560.8 V568.6 L1271.9,572.5 L1264.6,568.6 V560.8 Z" fill="#21a9b0"/>
<path d="M1268.6,563 A2,2 0 1 1 1271.9,564.7 A2,2 0 1 0 1275.2,566.4 M1268.6,566.4 A1.7,1.7 0 0 1 1268.6,563 M1275.2,563 A1.7,1.7 0 0 1 1275.2,566.4" fill="none" stroke="#fff" stroke-width="1"/>
<path d="M1238.5,626.5 L1240.5,624 H1243 M1257,624 H1259.5 L1261.5,626.5" fill="none" stroke="#333" stroke-width="1.2"/>
<circle cx="1248.6" cy="648.9" r="24" fill="#fff" stroke="#e3ebec" stroke-width="0.8"/>
<circle cx="1248.6" cy="648.9" r="22.3" fill="url(#rg)"/>
<clipPath id="cc"><circle cx="1248.6" cy="648.9" r="22.3"/></clipPath>
<g clip-path="url(#cc)">
<path d="M1236.5,673 L1239.5,660 C1240.5,657.5 1244,656.5 1248.6,656.5 C1253,656.5 1256.5,657.5 1257.5,660 L1261,673 Z" fill="#1c9aa0"/>
</g>
<path d="M1229.8,648 C1229.8,636 1238,629.5 1248.6,629.5 C1259,629.5 1267.3,636 1267.3,648 C1267.3,655 1260,658.5 1248.6,658.5 C1237,658.5 1229.8,655 1229.8,648 Z" fill="#fff"/>
<path d="M1232.4,648 C1232.4,641.5 1235.5,638.3 1240.5,638.5 L1245,641 H1252.2 L1256.7,638.5 C1261.5,638.3 1264.6,641.5 1264.6,648 C1264.6,654 1259.5,656.4 1248.5,656.4 C1237.5,656.4 1232.4,654 1232.4,648 Z" fill="#0c1f28"/>
<ellipse cx="1240.2" cy="647.8" rx="4.3" ry="4.5" fill="#22c9d4"/>
<ellipse cx="1255.8" cy="647.8" rx="4.3" ry="4.5" fill="#22c9d4"/>
<path d="M1247.7,629 L1251.8,631.3 V636 L1247.7,638.3 L1243.6,636 V631.3 Z" fill="#3bbfc4"/>
</svg>

</body></html>
